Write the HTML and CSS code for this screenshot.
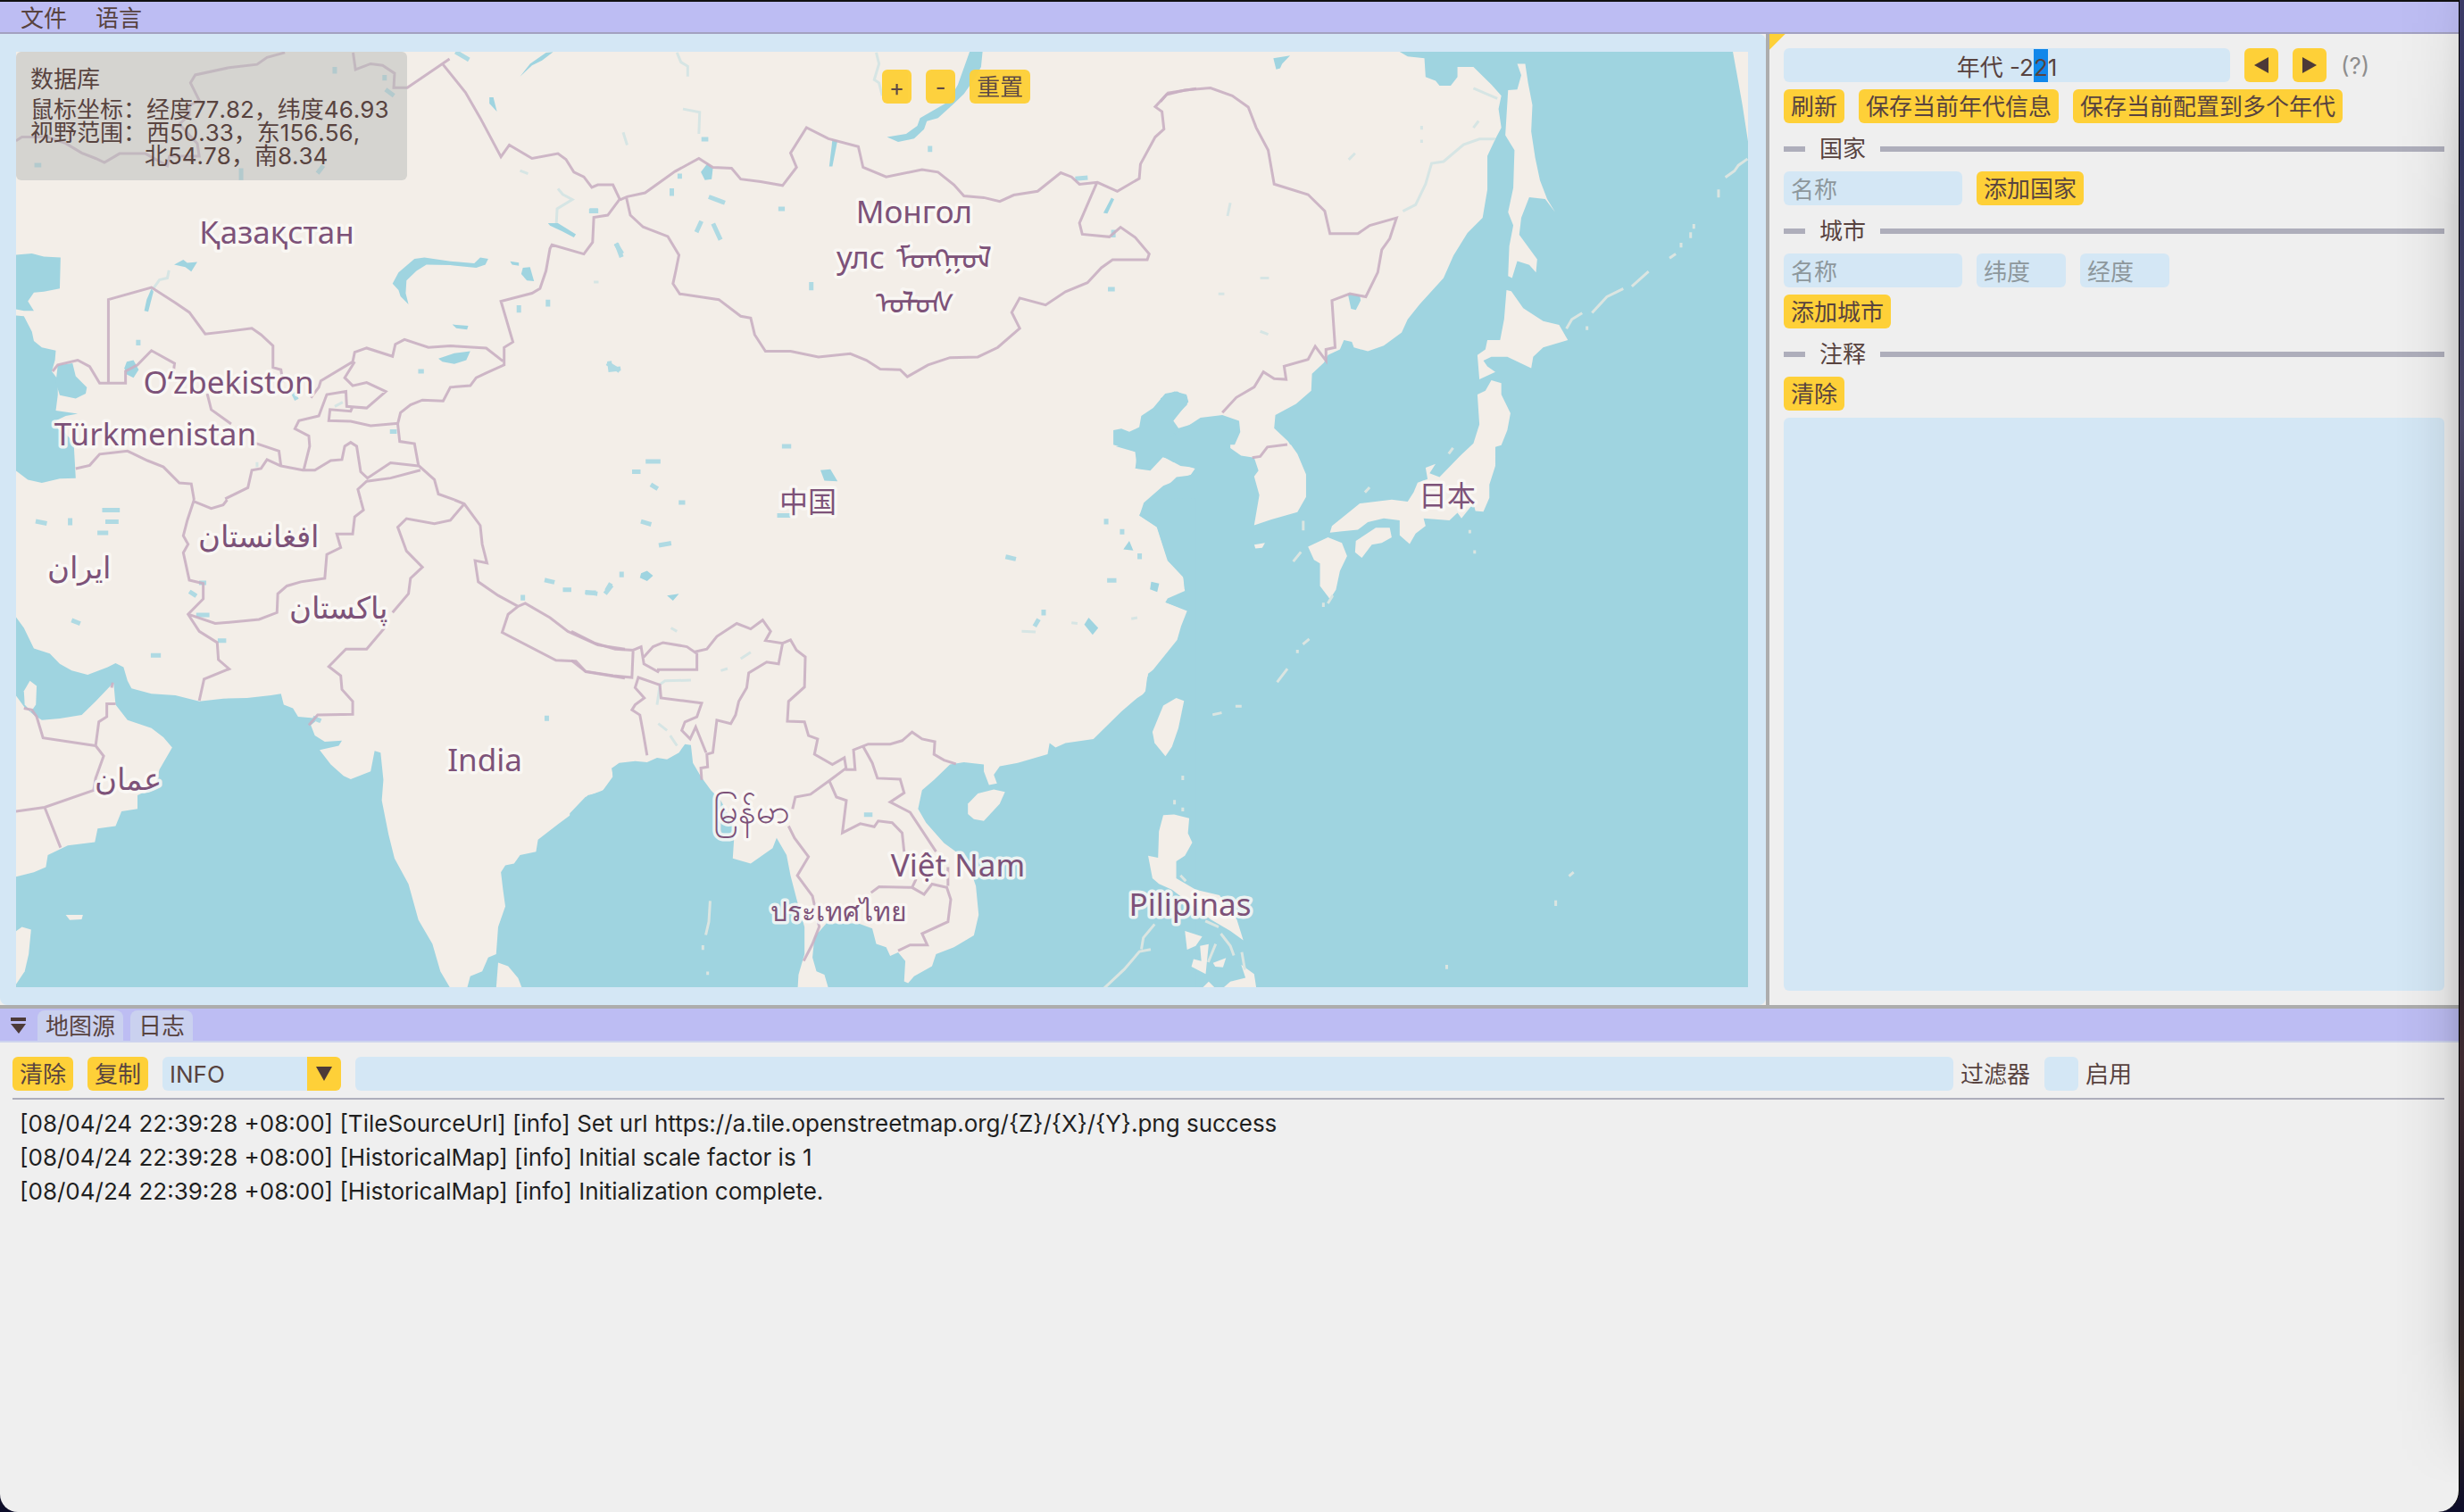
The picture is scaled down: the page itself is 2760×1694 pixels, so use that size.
FILE: index.html
```html
<!DOCTYPE html>
<html lang="zh-CN">
<head>
<meta charset="utf-8">
<meta name="viewport" content="width=device-width, initial-scale=1">
<title>HistoricalMap</title>
<link rel="stylesheet" href="styles.css">
</head>
<body>
<div class="window">
  <nav class="menubar">
    <button class="menu-item" type="button">文件</button>
    <button class="menu-item" type="button">语言</button>
  </nav>

  <main class="workspace">
    <section class="map-pane">
      <svg class="map" viewBox="18 58 1940 1048" preserveAspectRatio="none" role="img" aria-label="地图">
        <rect class="land" x="18" y="58" width="1940" height="1048"/>

        <!-- seas -->
        <g class="sea">
          <g transform="scale(.4464 .3571)">
            <path d="M38 800L80 795L110 805L152 808L150 905L110 915L85 918L70 945L85 975L60 975L38 970Z"/>
            <path d="M38 990L60 992L80 1040L85 1070L105 1090L140 1100L138 1130L130 1165L145 1190L145 1240L140 1288L195 1298L165 1305L140 1320L145 1345L165 1360L185 1390L190 1500L150 1502L105 1515L70 1505L38 1475Z"/>
            <path d="M145 1145L182 1140L190 1180L218 1215L215 1235L190 1250L150 1240L140 1200Z"/>
          </g>
          <g transform="translate(640 0) scale(.4464 .3571)">
            <path d="M1490 1235L1520 1228L1545 1245L1545 1270L1520 1300L1505 1330L1520 1345L1572 1325L1572 1455L1510 1450L1487 1430L1450 1450L1450 1470L1415 1470L1420 1420L1400 1410L1360 1395L1360 1350L1380 1345L1400 1355L1425 1340L1430 1305L1460 1280Z"/>
            <path d="M1572 1492L1520 1500L1490 1540L1460 1572L1572 1572Z"/>
          </g>
          <path transform="translate(1300 0) scale(.4464 .4209)" d="M600 138L620 150L662 155L665 205L690 215L700 228L728 228L745 205L745 178L785 178L830 225L855 255L848 290L855 340L840 370L820 415L820 505L808 580L770 620L735 680L710 740L650 810L620 850L605 885L560 920L520 935L485 925L480 910L460 905L450 930L420 945L410 965L380 995L378 1040L340 1075L288 1105L285 1140L320 1175L350 1225L368 1275L365 1335L355 1360L315 1375L275 1385L235 1400L245 1360L245 1310L235 1275L255 1262L245 1225L210 1215L180 1198L200 1150L197 1120L155 1105L100 1112L60 1140L25 1165L45 1140L32 1120L70 1070L65 1050L35 1042L0 1060L0 1215L15 1220L50 1240L88 1245L75 1265L40 1270L0 1310L0 1430L20 1495L60 1540L60 1568L1476 1568L1476 138Z"/>
          <path transform="translate(1240 500) scale(.4847 .4209)" d="M20 0L65 15L70 60L100 65L130 28L150 40L205 60L195 75L130 105L85 150L75 185L115 215L140 305L175 340L180 385L140 405L135 415L170 430L190 435L180 470L165 520L125 580L95 605L90 650L60 695L30 715L0 748L0 1442L1483 1442L1483 0Z"/>
          <path transform="translate(640 560) scale(.4464 .3827)" d="M1568 -5L1450 0L1425 45L1470 80L1495 170L1535 215L1540 265L1545 285L1490 300L1545 325L1530 370L1520 410L1465 490L1445 520L1440 565L1420 580L1380 620L1310 700L1240 712L1215 725L1200 712L1195 745L1120 770L1075 780L1060 805L1068 830L1048 835L1035 795L1035 775L985 768L950 775L910 820L880 850L870 905L890 945L935 1005L965 1030L1000 1080L1015 1130L1022 1215L1010 1275L960 1310L915 1330L905 1365L860 1395L845 1415L835 1410L838 1350L820 1325L800 1335L790 1310L765 1300L755 1255L720 1240L640 1240L610 1280L605 1340L615 1380L635 1390L645 1430L1568 1430Z"/>
          <path transform="translate(640 560) scale(.4464 .3827)" d="M-4 918L35 870L80 850L105 820L102 785L120 770L160 765L190 768L215 755L240 760L270 740L285 715L300 718L305 770L325 810L350 850L375 880L410 960L405 1050L450 1065L505 1020L515 990L540 1040L550 1100L570 1190L585 1250L585 1330L570 1390L568 1430L-4 1430Z"/>
          <g transform="translate(0 560) scale(.4464 .3827)">
            <path d="M38 340L60 375L85 435L125 450L150 480L180 500L220 512L270 490L290 478L310 490L320 530L330 552L380 568L440 572L500 590L560 582L620 580L680 572L705 568L712 600L735 610L748 635L800 640L780 660L790 690L815 708L858 705L850 720L802 732L830 775L862 808L880 818L930 795L940 735L955 740L962 820L958 880L975 980L990 1050L1025 1125L1050 1230L1085 1300L1105 1380L1130 1430L38 1430L38 1104L85 1090L115 1075L120 1040L170 1012L238 1002L245 962L290 955L305 912L345 905L345 865L390 840L400 790L432 725L410 695L380 668L320 645L290 600L285 535L240 590L205 630L150 640L105 645L85 630L60 605L38 570Z"/>
            <path d="M1572 770L1535 785L1538 810L1510 855L1475 865L1440 915L1400 950L1350 995L1345 1030L1305 1040L1290 1065L1268 1070L1257 1090L1262 1140L1268 1190L1250 1250L1245 1330L1225 1340L1210 1380L1180 1395L1172 1430L1572 1430Z"/>
          </g>
        </g>

        <!-- islands -->
        <g class="land">
          <g transform="translate(1300 0) scale(.4464 .4209)">
            <path d="M895 170L915 170L922 220L933 280L930 350L940 420L952 480L970 530L990 565L965 530L925 525L905 580L900 625L945 690L942 725L925 705L895 695L882 740L872 735L875 655L885 600L872 565L885 500L888 400L865 360L872 240L895 238L905 200Z"/>
            <path d="M868 772L880 775L910 820L960 855L1000 865L1022 905L960 925L935 950L930 980L870 950L830 950L810 960L820 975L840 990L800 1010L795 945L815 930L820 905L852 905L862 850Z"/>
            <path d="M1436 138L1476 138L1476 390L1460 280L1450 220Z"/>
            <path d="M235 1450L262 1445L255 1458L238 1460Z"/>
          </g>
          <g transform="translate(1240 500) scale(.4847 .4209)">
            <path d="M285 -4L285 5L310 25L340 30L350 65L340 80L352 130L340 210L380 195L440 175L460 135L460 75L440 20L425 -4Z"/>
            <path d="M160 670L178 678L165 750L150 800L135 825L110 790L105 760L130 690Z"/>
            <path d="M130 982L155 980L190 990L187 1030L197 1055L180 1090L160 1105L160 1150L175 1160L205 1180L260 1195L300 1260L315 1315L285 1290L240 1260L190 1215L150 1180L120 1165L105 1150L95 1090L118 1095L120 1025Z"/>
            <path d="M180 1290L220 1305L205 1330L185 1340Z"/>
            <path d="M215 1330L235 1325L228 1405L195 1385L200 1365L218 1370Z"/>
            <path d="M245 1375L275 1362L268 1387L250 1385Z"/>
            <path d="M310 1380L340 1405L345 1442L268 1442L285 1425L320 1415Z"/>
            <path d="M220 1442L235 1425L250 1442Z"/>
          </g>
          <g transform="translate(1300 0) scale(.4464 .4209)">
            <path d="M830 1012L855 1020L855 1050L878 1100L870 1145L855 1185L840 1190L840 1240L825 1290L825 1325L810 1362L790 1360L785 1340L755 1380L745 1365L725 1385L660 1380L665 1400L640 1420L625 1448L600 1425L600 1385L560 1380L520 1390L495 1410L450 1415L425 1418L430 1400L500 1340L580 1330L620 1335L635 1310L645 1285L670 1275L665 1245L690 1235L675 1260L700 1270L750 1215L785 1180L800 1130L795 1050L815 1040Z"/>
            <path d="M490 1440L540 1405L575 1405L580 1430L555 1445L530 1450L505 1485L488 1470Z"/>
            <path d="M370 1455L420 1430L455 1445L468 1480L450 1520L440 1570L425 1595L400 1560L400 1500L385 1490Z"/>
          </g>
          <path transform="translate(640 560) scale(.4464 .3827)" d="M995 890L1020 860L1060 848L1088 855L1075 890L1035 940L1010 935L995 920Z"/>
          <g transform="translate(0 560) scale(.4464 .3827)">
            <path d="M1250 1355L1275 1365L1300 1400L1310 1430L1245 1430Z"/>
            <path d="M165 1215L208 1215L205 1228L175 1230Z"/>
            <path d="M38 1265L55 1250L78 1258L72 1330L62 1380L38 1422Z"/>
            <path d="M60 560L75 530L92 545L90 600L78 620L62 600Z"/>
          </g>
        </g>

        <!-- small islands and island chains -->
        <g class="islets">
          <path transform="translate(1300 0) scale(.4464 .4209)" d="M1020 872L1032 850L1055 835M1085 830L1120 790L1158 770M1185 760L1222 725M1280 685L1290 678M1306 655V650M1330 630V622M1338 605V600M1420 470L1440 455L1450 440L1470 425M1400 522V508M1070 875V872M725 1205L732 1195M515 1308L522 1300M335 1492L350 1472M358 1408V1390M788 1470V1468M776 1416V1414"/>
          <path transform="translate(1240 500) scale(.4847 .4209)" d="M395 625L415 595M440 547V545M455 525L465 515M500 424V420M512 415L520 400M247 714L262 710M300 692H308M1070 1142L1076 1136M1037 1220V1212M785 1388V1384M-6 1442L40 1392L75 1345L98 1340M80 1335L84 1308L108 1275M265 1300L285 1330L292 1352M235 1370L250 1328M230 1265L255 1278M312 1350L318 1390M172 1145L180 1155M175 885V880M156 950V945M175 968V965"/>
          <path transform="translate(640 560) scale(.4464 .3827)" d="M348 1178L345 1235L338 1270M330 1308V1314M342 1385V1387"/>
        </g>

        <!-- lakes -->
        <g class="sea">
          <g transform="scale(.4464 .3571)">
            <path d="M985 890L1000 855L1040 812L1065 808L1130 820L1190 826L1205 808L1225 812L1218 830L1195 840L1130 832L1070 830L1045 850L1020 880L1018 920L1025 955L1005 930L1000 910Z"/>
            <path d="M1280 820L1302 824L1302 834L1285 830Z"/>
            <path d="M1312 840L1330 838L1340 882L1322 880L1308 860Z"/>
            <path d="M1100 1125L1140 1108L1180 1102L1170 1130L1140 1142L1110 1135Z"/>
            <path d="M437 830L460 815L470 825L495 822L480 852L465 838Z"/>
            <path d="M380 905L385 915L372 978L362 975L368 940Z"/>
            <path d="M318 1135L335 1130L348 1160L335 1185L318 1175L312 1155Z"/>
            <path d="M1375 700L1400 700L1445 735L1440 745L1410 725L1380 708Z"/>
            <path d="M1228 305L1238 305L1247 350L1228 325Z"/>
            <path d="M1305 240L1330 200L1370 165L1388 163L1360 190L1335 205Z"/>
            <path d="M1135 1018L1175 1022L1172 1034L1145 1030Z"/>
          </g>
          <g transform="translate(640 0) scale(.4464 .3571)">
            <path d="M1000 160L1032 160L1028 210L1010 250L985 295L960 325L920 370L892 380L885 405L860 435L820 445L792 430L840 420L868 395L875 370L910 345L945 320L970 265Z"/>
            <path d="M655 440L668 440L655 522L647 522Z"/>
            <path d="M325 540L342 512L355 530L352 562L335 565Z"/>
            <path d="M625 1475L650 1472L668 1510L635 1508Z"/>
            <path d="M1355 620L1362 625L1345 670L1335 668Z"/>
          </g>
          <g transform="translate(1300 0) scale(.4464 .4209)">
            <path d="M470 782L500 785L502 800L490 825L478 822Z"/>
            <path d="M283 155L325 148L305 170L300 182L290 185Z"/>
          </g>
          <g transform="translate(640 560) scale(.4464 .3827)">
            <path d="M175 215L190 208L205 222L190 238L172 228Z"/>
            <path d="M240 280L270 275L255 295Z"/>
            <path d="M1287 365L1298 345L1322 375L1308 395Z"/>
            <path d="M1400 120L1410 148L1385 145Z"/>
            <path d="M1455 240L1475 245L1470 270L1452 262Z"/>
          </g>
        </g>
        <g class="ponds">
          <path transform="scale(.4464 .3571)" d="M1485 660H1495M1548 770L1558 790M1528 1143L1550 1160M1302 965V974M1375 947V955M840 217V224M972 285L984 296M965 242V246M738 1238L742 1248M984 1354H990M347 1073V1077M92 518H98M605 535V558M800 538L808 525M1148 166L1172 184M1055 1165H1058"/>
          <path transform="translate(640 0) scale(.4464 .3571)" d="M350 620L380 634M324 700L316 722M358 708L372 746M115 770L124 800M96 1140L98 1160L118 1157M192 1448H218M158 1480H168M534 1400H546M204 1524L212 1530M1270 560L1290 558M1352 907H1358M602 892V904M332 437H338M252 598V608M272 552V554M50 662H62M900 465V470M1360 738V728M525 655H530"/>
          <path transform="translate(0 560) scale(.4464 .3827)" d="M262 30H295M95 64L112 68M176 60V68M270 64H292M250 97H266M505 243H512M480 272L488 278M498 337H520M384 455H398M185 355L196 360M1372 236L1386 240M1418 263H1428M1475 272H1490M1525 260L1530 250M790 640L800 645M552 412H562M1312 285V288M1372 638V641"/>
          <path transform="translate(640 560) scale(.4464 .3827)" d="M40 271L60 274M88 270L98 255M126 217V220M180 65L195 70M225 132L245 128M522 46H545M275 8H280M1350 236H1362M1165 365L1170 355M1185 332V328M1426 163V167M1382 92V95M1342 62V65M1095 168L1110 172M740 922H750"/>
        </g>
        <g class="rivers">
          <path transform="scale(.4464 .3571)" d="M385 905L400 878L420 872L424 848M1400 592L1412 610L1436 626L1398 655L1396 700M1305 535L1325 545M1490 885H1502M840 1275L860 1262M645 1450V1465"/>
          <path transform="translate(640 0) scale(.4464 .3571)" d="M265 165L275 195L292 208L292 240M765 165L772 200L760 250L772 260L780 300M280 342L322 352L320 420M130 415L140 455"/>
          <path transform="translate(1300 0) scale(.4464 .4209)" d="M608 562L640 545L665 490L680 435L710 430L760 385L800 370L840 370M785 235L845 262M785 340L798 322M655 335V345M655 372V380M472 425L488 408M168 575L175 540M145 782H160M250 740H272M250 882L270 890"/>
          <path transform="translate(640 560) scale(.4464 .3827)" d="M220 542L235 530L300 528M222 545L215 600M425 465L450 446M375 500L392 494M218 655L240 675M248 690L265 720M1130 385L1165 387M1255 360L1270 362M1405 348L1420 345M250 375L265 385"/>
        </g>

        <!-- borders -->
        <g class="borders">
          <path transform="scale(.4464 .3571)" d="M40 442L55 430L120 430L165 450L205 480L240 497L262 510L300 482L365 482L420 520L425 490L500 490L495 450L450 390L475 360L475 330L500 315L478 260L490 235L575 212L645 202L670 180L715 165M886 165L892 218L930 200L960 205L990 230L988 275L1022 275L1110 200L1128 185M1110 200L1168 290L1205 370L1257 492L1278 455L1335 497L1400 482L1420 500L1440 540L1465 555L1485 588L1500 580L1538 580L1555 625L1525 675L1490 682L1487 760L1465 797L1385 768L1380 780L1370 850L1355 905L1335 920L1257 945L1270 1000L1287 1073L1265 1090L1265 1145L1220 1170L1195 1185L1180 1210L1130 1215L1112 1258L1060 1255L1030 1270L1005 1295L998 1330L1003 1385L1040 1392L1050 1460L1090 1505L1100 1550L1140 1568M272 1202L272 940L380 902L440 950L475 980L515 1048L570 1040L632 1030L655 1050L685 1085L685 1153L705 1160L710 1200M780 1248L800 1215L805 1195L885 1135L890 1105L920 1092L985 1118L992 1080L1015 1065L1075 1090L1130 1085L1220 1092L1262 1133M890 1135L865 1185L885 1210L920 1200L968 1228L920 1280L870 1275L868 1228L820 1238L800 1305L750 1320L740 1345L775 1368L777 1400L762 1475M885 1275L880 1290L828 1285L825 1320L880 1322L930 1336L1000 1328M132 1165L145 1145L195 1130L225 1150L250 1202L315 1202L315 1165L345 1145L380 1100L438 1140L435 1170M520 1235L530 1285L580 1330M640 1390L700 1415L705 1462L760 1475L790 1475L830 1445L858 1442L865 1400L880 1388L895 1400L905 1480L922 1500L980 1452L1050 1462M190 1470L225 1460L250 1425L320 1415L370 1445L410 1465L450 1515L480 1518L487 1568M705 1462L670 1442L655 1470L632 1475L622 1530L565 1565M1055 1475L980 1500L920 1510L898 1535L905 1568"/>
          <path transform="translate(640 0) scale(.4464 .3571)" d="M122 627L140 617L185 605L260 538L320 497L355 525L402 528L425 562L475 570L530 582L565 525L550 480L590 400L645 435L720 460L732 525L790 555L880 532L920 540L960 580L985 615L1035 620L1075 632L1110 612L1170 600L1228 542L1255 555L1275 578L1320 572L1370 600L1425 560L1428 515L1465 430L1487 405L1482 350L1465 335L1497 292L1568 278M138 620L148 675L180 712L242 742L270 800L262 850L255 890L272 922L370 940L425 992L450 998L460 1050L487 1102L550 1102L620 1120L700 1110L740 1130L775 1158L825 1160L843 1182L895 1145L950 1122L1020 1120L1070 1090L1125 1030L1105 980L1125 935L1190 957L1240 915L1295 887L1330 840L1358 815L1445 815L1450 797L1415 745L1378 713L1350 743L1282 735L1275 700L1318 575"/>
          <path transform="translate(1300 0) scale(.4464 .4209)" d="M0 270L15 252L60 240L125 234L180 255L220 285L240 340L270 400L285 490L370 518L412 562L425 622L495 622L525 600L592 580L575 635L555 665L545 725L515 790L475 782L430 800L438 925L415 930L415 960L388 922L370 957L310 975L315 1010L285 1008L258 990L235 1030L190 1058L155 1098M230 1218L250 1215L268 1190L318 1183"/>
          <path transform="translate(640 560) scale(.4464 .3827)" d="M0 385L60 420L110 437L155 440L152 520L105 515L35 502L0 470M155 440L175 430L182 480L220 505M182 460L205 430L230 418L290 430L315 450L315 497L215 497M310 445L340 437L365 400L415 362L450 378L480 352L500 385L487 412L530 420L550 410L565 440L587 460L585 548L545 590L542 648L585 650L595 690L618 700L610 745L655 775L685 755L690 790L712 790L708 732L745 715L800 715L830 705L855 680L880 700L912 708L910 745L935 762L965 773M530 420L520 480L490 475L445 507L440 550L420 590L412 630L400 655L365 645L355 740L340 745L342 782L325 785L327 820M190 748L180 680L172 630L152 615L160 600L183 580L160 550L168 520L222 542L225 580L280 588L327 595L315 635L285 650L277 675L298 700L312 665L338 740M690 785L650 820L600 862L562 870L555 905M545 955L560 990L595 1045L567 1100L605 1160L622 1250L605 1300L583 1350M648 825L665 870L690 880L680 975L725 948L760 957L770 940L805 945L830 975L835 1030M732 722L755 770L768 815L825 818L835 858L800 885L850 915L915 1030M752 1150L772 1133L855 1135L885 1155L905 1125L942 1135L952 1170L945 1235L880 1270L893 1303L850 1303L820 1320M855 1135L865 1110M945 1075L945 1130"/>
          <path transform="translate(0 560) scale(.4464 .3827)" d="M487 0L470 60L460 105L472 130L460 155L475 235L510 245L510 290L472 335L500 385L545 418L548 468L575 495L512 525L500 588M472 335L540 362L610 355L650 350L695 330L697 275L720 252L755 240L815 230L820 160L855 140L845 100L885 100L890 50L912 30L905 0M487 5L530 25L560 15L570 0M1140 0L1165 12L1205 75L1210 130L1222 185L1192 178L1200 240L1250 280L1300 312L1318 303L1380 345L1425 385L1500 425L1568 437M1300 312L1275 335L1260 388L1395 470L1445 472L1470 503L1568 522M1165 12L1130 60L1090 70L1020 55L998 80L1020 150L1060 197L1030 230L1025 275L985 330M965 345L965 375L920 437L868 437L825 488L855 515L858 555L885 590L885 628L797 630L775 660M60 610L80 615L92 635L108 697L240 720L248 650L268 635L268 597L290 597M240 720L260 750L240 815L235 850L112 900L40 912M112 900L152 1018M280 550L283 535"/>
        </g>

        <!-- country names -->
        <g class="labels">
          <text x="310" y="273">Қазақстан</text>
          <text x="256" y="441">O‘zbekiston</text>
          <text x="174" y="499">Türkmenistan</text>
          <text x="1024" y="250">Монгол</text>
          <text x="964" y="301">улс</text>
          <text class="mong" x="1057" y="301">ᠮᠣᠩᠭᠣᠯ</text>
          <text class="mong" x="1025" y="351">ᠤᠯᠤᠰ</text>
          <text class="han" x="905" y="574">中国</text>
          <text class="han" x="1621" y="567">日本</text>
          <text class="arab" x="88" y="648">ایران</text>
          <text class="arab" x="289" y="613">افغانستان</text>
          <text class="arab" x="379" y="693">پاکستان</text>
          <text class="arab" x="143" y="885">عمان</text>
          <text x="543" y="864">India</text>
          <text class="mymr" x="842" y="922">မြန်မာ</text>
          <text x="1073" y="982">Việt Nam</text>
          <text class="thai" x="939" y="1032">ประเทศไทย</text>
          <text x="1333" y="1026">Pilipinas</text>
        </g>
      </svg>

      <div class="map-info">
        <h2 class="map-info-title">数据库</h2>
        <p class="map-info-line">鼠标坐标：经度77.82，纬度46.93</p>
        <p class="map-info-line">视野范围：西50.33，东156.56,</p>
        <p class="map-info-line map-info-more">北54.78，南8.34</p>
      </div>

      <div class="map-controls">
        <button class="btn" type="button">+</button>
        <button class="btn" type="button">-</button>
        <button class="btn" type="button">重置</button>
      </div>
    </section>

    <aside class="side">
      <div class="row">
        <input class="field year" id="year" type="text" value="年代 -221" aria-label="年代">
        <button class="btn square" type="button" aria-label="上一年"><svg class="tri" viewBox="0 0 18 20"><path d="M17 1V19L1 10Z"/></svg></button>
        <button class="btn square" type="button" aria-label="下一年"><svg class="tri" viewBox="0 0 18 20"><path d="M1 1V19L17 10Z"/></svg></button>
        <span class="hint">(?)</span>
      </div>
      <div class="row">
        <button class="btn" type="button">刷新</button>
        <button class="btn" type="button">保存当前年代信息</button>
        <button class="btn" type="button">保存当前配置到多个年代</button>
      </div>
      <h2 class="divider">国家</h2>
      <div class="row">
        <input class="field name" type="text" placeholder="名称" aria-label="国家名称">
        <button class="btn" type="button">添加国家</button>
      </div>
      <h2 class="divider">城市</h2>
      <div class="row">
        <input class="field name" type="text" placeholder="名称" aria-label="城市名称">
        <input class="field coord" type="text" placeholder="纬度" aria-label="纬度">
        <input class="field coord" type="text" placeholder="经度" aria-label="经度">
      </div>
      <div class="row"><button class="btn" type="button">添加城市</button></div>
      <h2 class="divider">注释</h2>
      <div class="row"><button class="btn" type="button">清除</button></div>
      <textarea class="field note" aria-label="注释"></textarea>
    </aside>
  </main>

  <section class="dock">
    <div class="tabs">
      <button class="collapse" type="button" aria-label="折叠"><svg class="collapse-icon" viewBox="0 0 17 18"><path d="M0 0H17V4H0ZM0 7H17L9 18Z"/></svg></button>
      <button class="tab" type="button">地图源</button>
      <button class="tab" type="button">日志</button>
    </div>
    <div class="log-panel">
      <div class="toolbar">
        <button class="btn" type="button">清除</button>
        <button class="btn" type="button">复制</button>
        <span class="combo">
          <select class="combo-select" aria-label="日志级别"><option>INFO</option><option>WARN</option><option>ERROR</option></select>
          <svg class="combo-arrow" viewBox="0 0 18 16"><path d="M0 0H18L9 16Z"/></svg>
        </span>
        <div class="labeled grow">
          <input class="field filter" id="filter" type="text">
          <label for="filter">过滤器</label>
        </div>
        <div class="labeled">
          <input class="check" id="enable" type="checkbox">
          <label for="enable">启用</label>
        </div>
      </div>
      <ol class="log">
        <li>[08/04/24 22:39:28 +08:00] [TileSourceUrl] [info] Set url https://a.tile.openstreetmap.org/{Z}/{X}/{Y}.png success</li>
        <li>[08/04/24 22:39:28 +08:00] [HistoricalMap] [info] Initial scale factor is 1</li>
        <li>[08/04/24 22:39:28 +08:00] [HistoricalMap] [info] Initialization complete.</li>
      </ol>
    </div>
  </section>
  <div class="edge-shade"></div>
</div>
<script src="app.js"></script>
</body>
</html>
```
FILE: styles.css
```css
:root {
  --text: #58433f;
  --accent: #fed038;
  --field: #d4e7f5;
  --bar: #bdbdf3;
  --rule: #aeaebb;
  --panel: #efefef;
}

* { box-sizing: border-box; }

body {
  margin: 0;
  min-height: 100vh;
  padding-right: 5px;
  background: linear-gradient(#3b3a66, #34365e 10%, #4c4868 28%, #2b2232 45%, #1d1b2b 58%, #3f2a30 70%, #241c28 82%, #33231f 92%, #0d0d2a);
  color: var(--text);
  font: 26px/30px Inter, "Noto Sans CJK SC", sans-serif;
}

button, input, select, textarea {
  margin: 0;
  border: 0;
  color: inherit;
  font: inherit;
}

h2, p, ol {
  margin: 0;
  padding: 0;
  font-size: inherit;
  font-weight: normal;
}

.window {
  position: relative;
  display: grid;
  grid-template-rows: auto minmax(0, 1088fr) minmax(0, 568fr);
  height: 100vh;
  overflow: hidden;
  border-top: 2px solid #101010;
  border-right: 1px solid #000;
  border-radius: 0 0 24px 20px;
  background: var(--panel);
}

/* menu bar */
.menubar {
  display: flex;
  gap: 32px;
  height: 36px;
  padding: 0 23px;
  border-bottom: 2px solid #a3a1c0;
  background: var(--bar);
}

.menu-item {
  padding: 3px 0 0;
  background: none;
}

/* workspace */
.workspace {
  display: grid;
  grid-template-columns: minmax(0, 1978fr) minmax(0, 776fr);
}

.map-pane {
  position: relative;
  min-height: 0;
  padding: 20px 20px 20px 18px;
  border-radius: 0 8px 8px 8px;
  background: var(--field);
}

.map {
  display: block;
  width: 100%;
  height: 100%;
}

.land { fill: #f3eee8; }
.sea { fill: #9fd4e0; }

.islets, .ponds, .rivers, .borders { fill: none; }
.islets path, .ponds path, .rivers path, .borders path { vector-effect: non-scaling-stroke; }
.islets { stroke: #dbe5e1; stroke-width: 3px; stroke-linecap: square; }
.ponds { stroke: #afdae3; stroke-width: 5px; stroke-linecap: square; }
.rivers { stroke: #d6e5e4; stroke-width: 3px; }
.borders { stroke: #c9afc2; stroke-width: 3px; stroke-opacity: .9; }

.labels {
  fill: #7d5279;
  stroke: #fbf9f6;
  stroke-opacity: .85;
  stroke-width: 7px;
  stroke-linejoin: round;
  paint-order: stroke;
  text-anchor: middle;
  font: 35px "Noto Sans", "Noto Sans CJK SC", sans-serif;
}

.labels .arab, .labels .mong { font-size: 34px; }
.labels .han { font-size: 32px; font-family: "Noto Sans CJK SC", sans-serif; }
.labels .mymr { font-size: 38px; }
.labels .thai { font-size: 30px; }

.map-info {
  position: absolute;
  top: 20px;
  left: 18px;
  width: 438px;
  padding: 16px 16px 14px;
  border-radius: 6px;
  background: rgba(184, 186, 184, .5);
  font-kerning: none;
  text-spacing-trim: space-all;
}

.map-info-title { height: 36px; }
.map-info-line { line-height: 26px; white-space: nowrap; }
.map-info-more { padding-left: 128px; }

.map-controls {
  position: absolute;
  top: 40px;
  left: 988px;
  display: flex;
  gap: 16px;
}

.map-controls .btn { min-width: 33px; opacity: .96; }

/* controls */
.btn {
  flex: none;
  height: 38px;
  padding: 2px 8px 0;
  border-radius: 6px;
  background: var(--accent);
  white-space: nowrap;
}

.square {
  display: flex;
  align-items: center;
  justify-content: center;
  width: 38px;
  padding: 0;
}

.tri {
  width: 18px;
  height: 20px;
  fill: #4d3a38;
}

.field {
  height: 38px;
  padding: 2px 8px 0;
  border-radius: 6px;
  outline: 0;
  background: var(--field);
}

.field::placeholder {
  color: #8d979c;
  opacity: 1;
}

/* side panel */
.side {
  display: flex;
  flex-direction: column;
  gap: 8px;
  padding: 16px;
  border-left: 4px solid #adadad;
  background: linear-gradient(135deg, var(--accent) 12px, transparent 13px), var(--panel);
}

.row {
  display: flex;
  gap: 16px;
}

.year {
  flex: 0 1 500px;
  min-width: 0;
  padding-top: 0;
  text-align: center;
}

.year::selection {
  background: #1187ea;
  color: var(--text);
}

.hint {
  padding-top: 5px;
  color: #8e8e8e;
}

.name { width: 200px; }
.coord { width: 100px; }

.divider {
  display: flex;
  align-items: center;
  gap: 16px;
  height: 38px;
  padding-top: 4px;
}

.divider::before, .divider::after {
  content: "";
  flex: 0 0 24px;
  height: 6px;
  background: var(--rule);
}

.divider::after { flex: 1; }

.note {
  flex: 1;
  width: 100%;
  resize: none;
}

/* bottom dock */
.dock {
  display: flex;
  flex-direction: column;
  border-top: 4px solid #adadad;
}

.tabs {
  display: flex;
  gap: 8px;
  height: 38px;
  padding: 2px 12px 0;
  border-bottom: 2px solid #cdd3ee;
  background: var(--bar);
}

.collapse {
  width: 22px;
  padding: 0 5px 0 0;
  background: none;
}

.collapse-icon {
  display: block;
  width: 17px;
  height: 18px;
  fill: #4d3a38;
}

.tab {
  padding: 2px 9px 0;
  border-radius: 8px 8px 0 0;
  background: #cad1ef;
}

.log-panel {
  padding: 16px 16px 16px 14px;
}

.toolbar {
  display: flex;
  gap: 16px;
  padding-bottom: 8px;
  border-bottom: 2px solid var(--rule);
}

.combo {
  position: relative;
  flex: 0 0 200px;
}

.combo-select {
  width: 100%;
  height: 38px;
  padding: 2px 8px 0;
  border-radius: 6px;
  appearance: none;
  background: linear-gradient(90deg, var(--field) 162px, var(--accent) 162px);
}

.combo-arrow {
  position: absolute;
  top: 11px;
  right: 10px;
  width: 18px;
  height: 16px;
  fill: #4d3a38;
  pointer-events: none;
}

.labeled {
  display: flex;
  flex: 0 0 auto;
  gap: 8px;
}

.labeled label { line-height: 40px; height: 38px; }

.grow { flex: 0 1 1876px; }
.filter { flex: 1; min-width: 0; }

.check {
  width: 38px;
  height: 38px;
  border-radius: 6px;
  appearance: none;
  background: var(--field);
}

.log {
  padding: 8px;
  color: #1f1f1f;
  line-height: 38px;
  list-style: none;
}

/* soft shade along the right edge */
.edge-shade {
  position: absolute;
  inset: 0 0 30px auto;
  width: 72px;
  background: linear-gradient(90deg, transparent, rgba(0, 0, 0, .02) 40%, rgba(0, 0, 0, .06) 75%, rgba(0, 0, 0, .14));
  mask-image: linear-gradient(rgba(0, 0, 0, .3), #000 14%, #000 90%, transparent);
  pointer-events: none;
}
```
FILE: app.js
```js
// Select one digit of the year, ready to be typed over.
const year = document.getElementById('year');
year.focus();
year.setSelectionRange(5, 6);
```
